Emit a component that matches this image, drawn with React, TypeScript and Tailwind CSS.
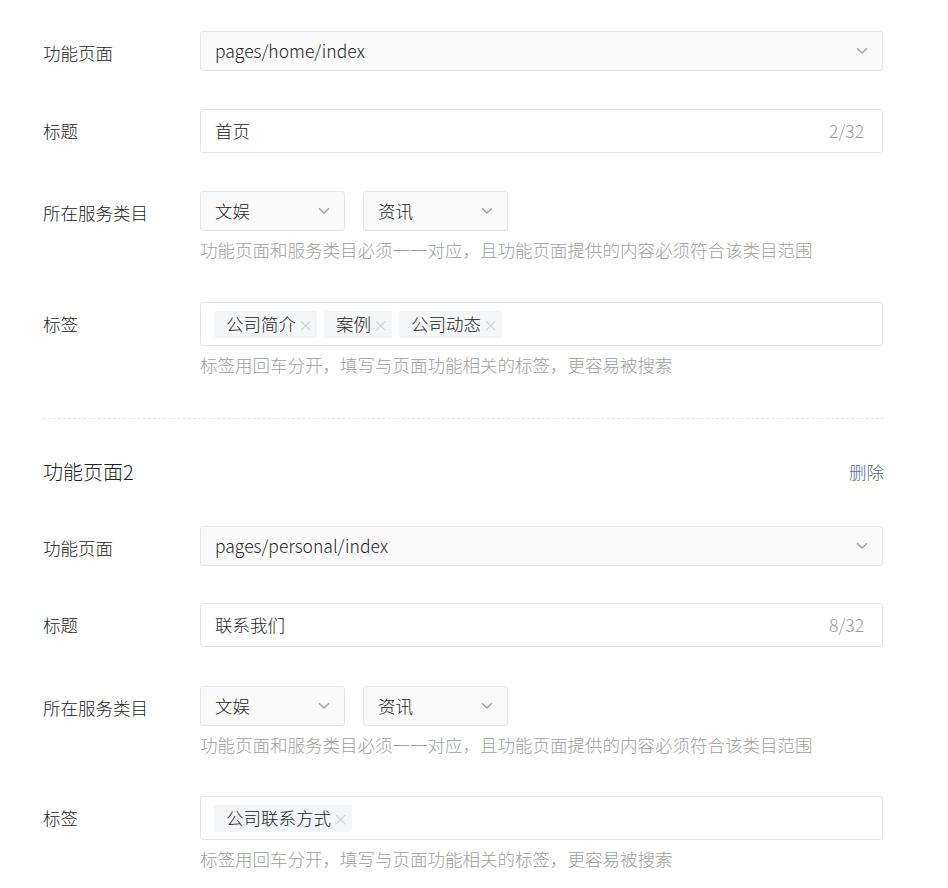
import React from "react";

const Chevron = () => (
  <svg width="12" height="8" viewBox="0 0 12 8" fill="none" className="shrink-0">
    <path d="M1.5 1.8 L6 6 L10.5 1.8" stroke="#a3a3a3" strokeWidth="1.5" strokeLinecap="round" strokeLinejoin="round" />
  </svg>
);

const Label = ({ children }: { children: React.ReactNode }) => (
  <div className="w-[157px] shrink-0 h-[44px] pb-[2px] flex items-center text-[#222]">{children}</div>
);

const PageSelect = ({ value }: { value: string }) => (
  <div className="h-[40px] w-full flex items-center justify-between pl-[14px] pr-[14px] bg-[#fafafa] border border-[#e6e6e6] rounded-[3px] text-[#222]">
    <span className="-mt-[2px]">{value}</span>
    <Chevron />
  </div>
);

const TitleInput = ({ value, count }: { value: string; count: string }) => (
  <div className="h-[44px] w-full flex items-center justify-between pl-[14px] pr-[18px] bg-white border border-[#e6e6e6] rounded-[3px]">
    <span className="text-[#222] -mt-[2px]">{value}</span>
    <span className="text-[#999] -mt-[2px]">{count}</span>
  </div>
);

const SmallSelect = ({ value }: { value: string }) => (
  <div className="h-[40px] w-[145px] flex items-center justify-between pl-[14px] pr-[14px] bg-[#fafafa] border border-[#e6e6e6] rounded-[3px] text-[#222]">
    <span className="-mt-[2px]">{value}</span>
    <Chevron />
  </div>
);

const Tag = ({ text }: { text: string }) => (
  <div className="h-[27px] flex items-center pl-[12px] pr-[4px] bg-[#f4f5f7] rounded-[2px] text-[#222]">
    <span className="-mt-[1px]">{text}</span>
    <span className="ml-[2px] text-[15px] text-[#c4c4c4] leading-none">×</span>
  </div>
);

const Help = ({ children }: { children: React.ReactNode }) => (
  <div className="mt-[6px] leading-[25px] text-[#9e9e9e]">{children}</div>
);

const CategoryRow = () => (
  <div className="flex">
    <Label>所在服务类目</Label>
    <div className="flex-1 pr-[1px]">
      <div className="flex gap-[18px]">
        <SmallSelect value="文娱" />
        <SmallSelect value="资讯" />
      </div>
      <Help>功能页面和服务类目必须一一对应，且功能页面提供的内容必须符合该类目范围</Help>
    </div>
  </div>
);

const TagRow = ({ tags }: { tags: string[] }) => (
  <div className="flex">
    <Label>标签</Label>
    <div className="flex-1 pr-[1px]">
      <div className="h-[44px] w-full flex items-center gap-[7px] pl-[13px] bg-white border border-[#e6e6e6] rounded-[3px]">
        {tags.map((t) => (
          <Tag key={t} text={t} />
        ))}
      </div>
      <Help>标签用回车分开，填写与页面功能相关的标签，更容易被搜索</Help>
    </div>
  </div>
);

export default function App() {
  return (
    <div className="w-[948px] h-[888px] bg-white overflow-hidden font-['Noto_Sans_CJK_SC','Microsoft_YaHei',sans-serif] font-light text-[17.5px] leading-[25px]">
      <div className="w-[841px] ml-[43px] pt-[31px]">
        <div className="flex mb-[34px]">
          <Label>功能页面</Label>
          <div className="flex-1 pr-[1px]"><PageSelect value="pages/home/index" /></div>
        </div>
        <div className="flex mb-[38px]">
          <Label>标题</Label>
          <div className="flex-1 pr-[1px]"><TitleInput value="首页" count="2/32" /></div>
        </div>
        <div className="mb-[40px]"><CategoryRow /></div>
        <TagRow tags={["公司简介", "案例", "公司动态"]} />

        <div className="mt-[41px] border-t border-dashed border-[#e8e8e8]" />

        <div className="mt-[39px] flex items-center justify-between h-[28px]">
          <span className="text-[20px] text-[#222] -mt-[2px]">功能页面2</span>
          <span className="text-[#576b95] -mt-[2px]">删除</span>
        </div>

        <div className="mt-[40px] flex mb-[33px]">
          <Label>功能页面</Label>
          <div className="flex-1 pr-[1px]"><PageSelect value="pages/personal/index" /></div>
        </div>
        <div className="flex mb-[39px]">
          <Label>标题</Label>
          <div className="flex-1 pr-[1px]"><TitleInput value="联系我们" count="8/32" /></div>
        </div>
        <div className="mb-[39px]"><CategoryRow /></div>
        <TagRow tags={["公司联系方式"]} />
      </div>
    </div>
  );
}
